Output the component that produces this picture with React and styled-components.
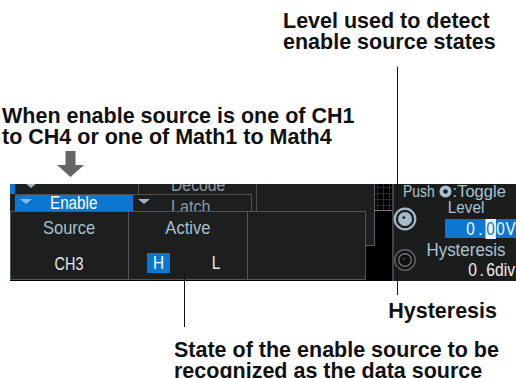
import React from 'react'
import styled, { createGlobalStyle } from 'styled-components'

const GlobalStyle = createGlobalStyle`
  html, body {
    margin: 0;
    padding: 0;
    background: #fff;
  }
  body {
    width: 516px;
    height: 378px;
    overflow: hidden;
    font-family: "Liberation Sans", Arial, sans-serif;
  }
`

// ---- figure + callouts ----
const Figure = styled.div`
  position: relative;
  width: 516px;
  height: 378px;
  overflow: hidden;
  display: flex;
  flex-direction: column;
  & > * { flex-shrink: 0; }
`

const Note = styled.div`
  font-family: "Liberation Sans", Arial, sans-serif;
  font-weight: bold;
  font-size: 21.5px;
  line-height: 21px;
  color: #111;
  white-space: nowrap;
  margin-top: ${p => p.$top}px;
  padding-left: ${p => p.$left || 0}px;
  padding-right: ${p => p.$right || 0}px;
  text-align: ${p => p.$align || 'left'};
`

const Leader = styled.div`
  position: absolute;
  left: ${p => p.$x}px;
  top: ${p => p.$y}px;
  width: 1px;
  height: ${p => p.$h}px;
  background: #111;
`

const ArrowWrap = styled.div`
  margin: 3px 0 0 57px;
  height: 27px;
  svg { display: block; }
`

// screen text is a narrow sans; squeeze Liberation Sans horizontally
const Squeeze = styled.span`
  display: inline-block;
  white-space: nowrap;
  transform: scaleX(${p => p.$sx});
  transform-origin: ${p => p.$origin || 'center'};
`

// ---- instrument screen ----
const Screen = styled.div`
  margin: 6px 0 0 10px;
  width: 506px;
  height: 97px;
  display: flex;
  background: #000;
  font-family: "Liberation Sans", Arial, sans-serif;
`

const LeftArea = styled.div`
  width: 382px;
  display: flex;
  flex-direction: column;
`

const UpperBlock = styled.div`
  height: 27px;
  display: flex;
`

const TabStack = styled.div`
  width: 247px;
  display: flex;
  flex-direction: column;
`

const TabRow = styled.div`
  height: ${p => p.$h}px;
  display: flex;
`

const Stub = styled.div`
  width: 5px;
  background: ${p => (p.$blue ? '#0b77d1' : '#1d1f1e')};
`

const Tab = styled.div`
  box-sizing: border-box;
  width: ${p => p.$w}px;
  display: flex;
  align-items: flex-start;
  overflow: hidden;
  background: ${p => (p.$active ? '#0b77d1' : '#1d1f1e')};
  border-top: ${p => (p.$top ? '1px solid #4c5156' : 'none')};
  border-left: ${p => (p.$left ? '1px solid #4c5156' : 'none')};
  border-right: ${p => (p.$right ? '1px solid #4c5156' : 'none')};
`

const Caret = styled.div`
  flex-shrink: 0;
  width: 0;
  height: 0;
  margin: ${p => p.$y}px 0 0 ${p => p.$x}px;
  border-left: 6px solid transparent;
  border-right: 6px solid transparent;
  border-top: 5px solid ${p => p.$color};
`

const TabLabel = styled.span`
  flex-shrink: 0;
  display: inline-block;
  margin: ${p => p.$y}px 0 0 ${p => p.$x}px;
  font-size: 17.5px;
  line-height: 17px;
  color: ${p => (p.$active ? '#ffffff' : '#8c98a2')};
  white-space: nowrap;
  transform: scaleX(${p => p.$sx});
  transform-origin: left center;
`

const BackPanel = styled.div`
  box-sizing: border-box;
  width: ${p => p.$w}px;
  height: ${p => p.$h}px;
  background: #1d1f1e;
  border-right: 1px solid #5a5f64;
  border-bottom: ${p => (p.$bottom ? '1px solid #5a5f64' : 'none')};
`

const GridPatch = styled.div`
  box-sizing: border-box;
  width: 17px;
  background-color: #000;
  background-image:
    linear-gradient(#2c2c2c 1px, transparent 1px),
    linear-gradient(90deg, #2c2c2c 1px, transparent 1px);
  background-size: 6px 6px;
  background-position: 2px 3px;
  border-bottom: 1px solid #74797e;
`

const LowerBlock = styled.div`
  height: 70px;
  display: flex;
  align-items: flex-start;
`

const MainPanel = styled.div`
  box-sizing: border-box;
  width: 356px;
  height: 69px;
  display: grid;
  grid-template-columns: 118px 119px 1fr;
  background: #1d1f1e;
  border: 1px solid #51565b;
`

const Column = styled.div`
  box-sizing: border-box;
  display: flex;
  flex-direction: column;
  align-items: center;
  border-right: ${p => (p.$last ? 'none' : '1px solid #51565b')};
`

const ColHead = styled.div`
  margin-top: 6px;
  font-size: 19px;
  line-height: 20px;
  color: #a7bfcd;
  transform: scaleX(0.87);
`

const ColValue = styled.div`
  margin-top: 16px;
  height: 20px;
  font-size: 18px;
  line-height: 20px;
  color: #e8e8e8;
  transform: scaleX(0.8);
`

const Toggle = styled.div`
  align-self: stretch;
  margin-top: 15px;
  padding-left: 18px;
  display: flex;
  gap: 35px;
`

const ToggleKey = styled.div`
  width: 23px;
  height: 20px;
  text-align: center;
  font-size: 18px;
  line-height: 21px;
  color: ${p => (p.$on ? '#ffffff' : '#e8e8e8')};
  background: ${p => (p.$on ? '#0b77d1' : 'transparent')};
`

// ---- right knob panel ----
const KnobPanel = styled.div`
  box-sizing: border-box;
  width: 124px;
  display: flex;
  flex-direction: column;
  background: #1b1d1c;
  border-left: 2px solid #3f4448;
  color: #a9c3d3;
`

const PushRow = styled.div`
  height: 16px;
  padding-left: 9px;
  display: flex;
  align-items: flex-end;
  font-size: 16.5px;
  line-height: 17px;
  white-space: nowrap;
  svg { margin: 0 1px 2px 4px; flex-shrink: 0; }
`

const PushWord = styled.span`
  display: inline-block;
  transform: scaleX(0.84);
  transform-origin: left center;
  margin-right: -6px;
`

const KnobGroup = styled.div`
  height: ${p => p.$h}px;
  display: grid;
  grid-template-columns: 22px 1fr;
`

const KnobSlot = styled.div`
  padding-top: ${p => p.$y}px;
  svg { display: block; margin-left: -1px; }
`

const KnobText = styled.div`
  display: flex;
  flex-direction: column;
`

const KnobLabel = styled.div`
  margin-top: ${p => p.$y}px;
  text-align: center;
  font-size: ${p => p.$size}px;
  line-height: 15px;
  white-space: nowrap;
  transform: scaleX(${p => p.$sx});
`

const ValueBox = styled.div`
  margin: 4px 0 0 29px;
  height: 19px;
  display: flex;
  justify-content: flex-end;
  padding-right: 1px;
  background: #0b77d1;
  color: #ffffff;
  font-size: 17.5px;
  line-height: 20px;
`

const ValueLine = styled.div`
  margin-top: 3px;
  display: flex;
  justify-content: flex-end;
  padding-right: 1px;
  color: #f0f0f0;
  font-size: 18px;
  line-height: 18px;
  white-space: nowrap;
`

const Cell = styled.span`
  display: inline-block;
  width: ${p => p.$w || 11.5}px;
  text-align: center;
  background: ${p => (p.$hi ? '#f4f4f4' : 'transparent')};
  color: ${p => (p.$hi ? '#0b77d1' : 'inherit')};
`

function Knob({ active }) {
  if (active) {
    return (
      <svg width="24" height="24" viewBox="0 0 24 24">
        <circle cx="12" cy="12" r="10.3" fill="none" stroke="#a3bac9" strokeWidth="2.2" />
        <circle cx="12" cy="12" r="7" fill="#a3bac9" />
        <circle cx="10.8" cy="10.6" r="1.4" fill="#1b1d1c" />
      </svg>
    )
  }
  return (
    <svg width="24" height="24" viewBox="0 0 24 24">
      <circle cx="12" cy="12" r="10.2" fill="#121413" stroke="#5b6065" strokeWidth="1.6" />
      <circle cx="12" cy="12" r="6.3" fill="#0e0f0f" stroke="#6a7075" strokeWidth="1.4" />
      <circle cx="11" cy="11" r="1.2" fill="#3a3f43" />
    </svg>
  )
}

function PushIcon() {
  return (
    <svg width="13" height="13" viewBox="0 0 13 13">
      <circle cx="6.5" cy="6.5" r="6" fill="#a9c3d3" />
      <circle cx="6.5" cy="6.5" r="2.3" fill="#1b1d1c" />
    </svg>
  )
}

function DownArrow() {
  return (
    <svg width="28" height="27" viewBox="0 0 28 27">
      <rect x="8.5" y="0" width="10" height="15" fill="#656565" />
      <polygon points="0,14 27,14 13.5,26" fill="#656565" />
    </svg>
  )
}

export default function App() {
  return (
    <Figure>
      <GlobalStyle />

      <Note $top={11} $left={283}>
        Level used to detect
        <br />
        enable source states
      </Note>

      <Note $top={53} $left={2}>
        When enable source is one of CH1
        <br />
        to CH4 or one of Math1 to Math4
      </Note>

      <ArrowWrap>
        <DownArrow />
      </ArrowWrap>

      <Screen>
        <LeftArea>
          <UpperBlock>
            <TabStack>
              <TabRow $h={10}>
                <Stub $blue />
                <Tab $w={123}>
                  <Caret $x={10} $y={-1} $color="#9fb3c3" />
                </Tab>
                <Tab $w={119} $left $right>
                  <TabLabel $x={32} $y={-7} $sx={0.9}>Decode</TabLabel>
                </Tab>
              </TabRow>
              <TabRow $h={17}>
                <Stub />
                <Tab $w={118} $top $active>
                  <Caret $x={5} $y={4} $color="#8fb9e2" />
                  <TabLabel $x={18} $y={0} $sx={0.87} $active>Enable</TabLabel>
                </Tab>
                <Tab $w={119} $top $right>
                  <Caret $x={5} $y={4} $color="#9fb3c3" />
                  <TabLabel $x={21} $y={4} $sx={0.92}>Latch</TabLabel>
                </Tab>
                <Tab $w={5} $right />
              </TabRow>
            </TabStack>
            <BackPanel $w={118} $h={27} />
            <GridPatch />
          </UpperBlock>

          <LowerBlock>
            <MainPanel>
              <Column>
                <ColHead>Source</ColHead>
                <ColValue>CH3</ColValue>
              </Column>
              <Column>
                <ColHead>Active</ColHead>
                <Toggle>
                  <ToggleKey $on>
                    <Squeeze $sx={0.85}>H</Squeeze>
                  </ToggleKey>
                  <ToggleKey>
                    <Squeeze $sx={0.85}>L</Squeeze>
                  </ToggleKey>
                </Toggle>
              </Column>
              <Column $last />
            </MainPanel>
            <BackPanel $w={9} $h={35} $bottom />
          </LowerBlock>
        </LeftArea>

        <KnobPanel>
          <PushRow>
            <PushWord>Push</PushWord>
            <PushIcon />
            :Toggle
          </PushRow>
          <KnobGroup $h={40}>
            <KnobSlot $y={7}>
              <Knob active />
            </KnobSlot>
            <KnobText>
              <KnobLabel $y={0} $size={16.5} $sx={0.93}>Level</KnobLabel>
              <ValueBox>
                <Squeeze $sx={0.87} $origin="right center">
                  <Cell>0</Cell>
                  <Cell>.</Cell>
                  <Cell $hi>0</Cell>
                  <Cell>0</Cell>
                  <Cell>V</Cell>
                </Squeeze>
              </ValueBox>
            </KnobText>
          </KnobGroup>
          <KnobGroup $h={41}>
            <KnobSlot $y={8}>
              <Knob />
            </KnobSlot>
            <KnobText>
              <KnobLabel $y={3} $size={17.5} $sx={0.97}>Hysteresis</KnobLabel>
              <ValueLine>
                <Squeeze $sx={0.87} $origin="right center">
                  <Cell $w={10.5}>0</Cell>
                  <Cell $w={10.5}>.</Cell>
                  6div
                </Squeeze>
              </ValueLine>
            </KnobText>
          </KnobGroup>
        </KnobPanel>
      </Screen>

      <Note $top={20} $align="right" $right={19}>
        Hysteresis
      </Note>

      <Note $top={18} $left={174}>
        State of the enable source to be
        <br />
        recognized as the data source
      </Note>

      <Leader $x={397} $y={67} $h={141} />
      <Leader $x={397} $y={267} $h={28} />
      <Leader $x={184} $y={270} $h={57} />
    </Figure>
  )
}
